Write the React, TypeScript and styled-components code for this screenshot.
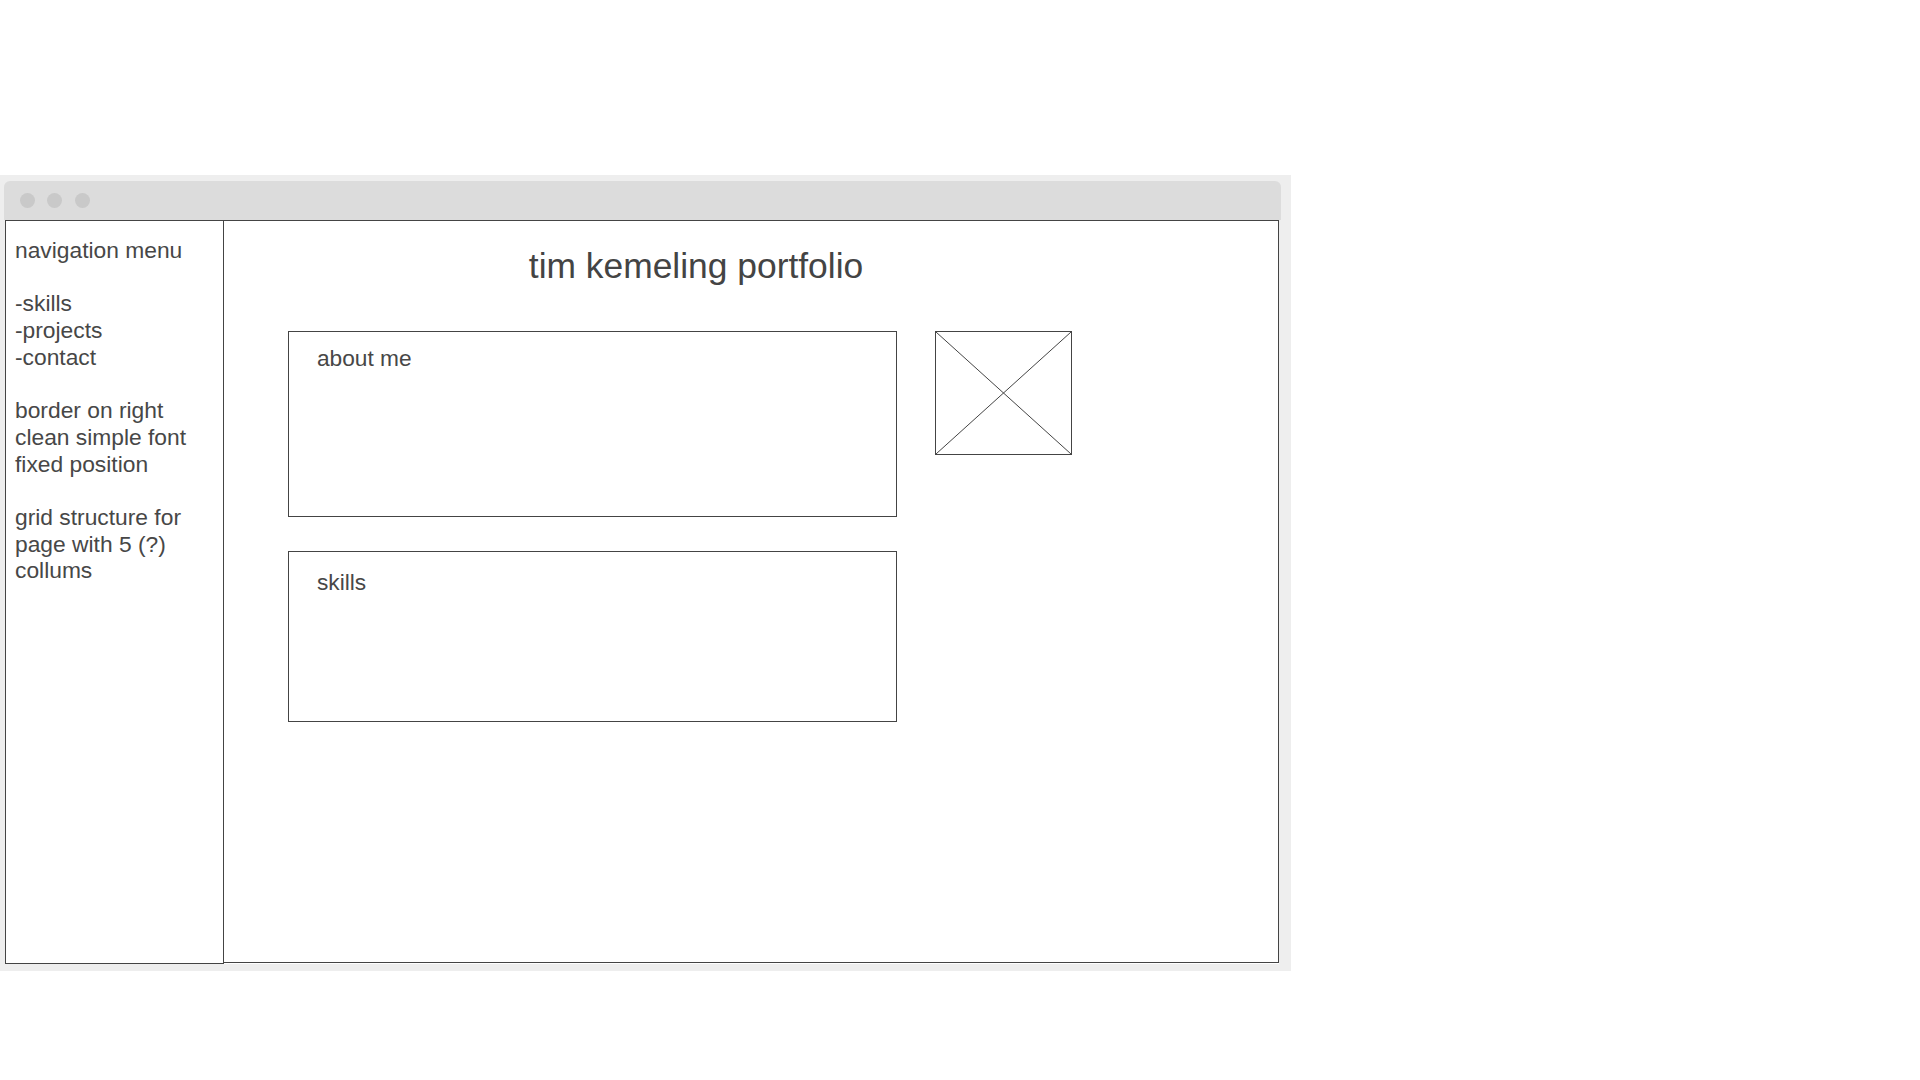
import styled, { createGlobalStyle } from 'styled-components';

const GlobalStyle = createGlobalStyle`
  html, body {
    margin: 0;
    padding: 0;
    background: #ffffff;
  }
  body {
    font-family: "Liberation Sans", Arial, sans-serif;
    color: #474747;
  }
`;

const Page = styled.div`
  width: 1920px;
  height: 1080px;
  padding-top: 175px;
  box-sizing: border-box;
`;

const Frame = styled.div`
  width: 1291px;
  height: 796px;
  background: #eeeeee;
  padding: 6px 10px 7px 4px;
  box-sizing: border-box;
  display: flex;
  flex-direction: column;
`;

const TitleBar = styled.div`
  height: 39px;
  flex: none;
  background: #dcdcdc;
  border-radius: 6px 6px 0 0;
  display: flex;
  align-items: center;
  gap: 12.5px;
  padding-left: 15.5px;
`;

const Dot = styled.span`
  width: 15px;
  height: 15px;
  border-radius: 50%;
  background: #c9c9c9;
`;

const Body = styled.div`
  flex: 1;
  display: flex;
  margin: 0 2px 0 1px;
  background: #ffffff;
`;

const Sidebar = styled.nav`
  width: 219px;
  flex: none;
  border: 1px solid #444444;
  box-sizing: border-box;
  padding: 16px 0 0 9px;
  font-size: 22.8px;
  line-height: 26.7px;
  white-space: pre-line;
`;

const Main = styled.main`
  flex: 1;
  border: 1px solid #444444;
  border-left: none;
  margin-bottom: 1px;
  padding: 25px 0 0 64px;
`;

const Title = styled.h1`
  margin: 0;
  width: 816px;
  text-align: center;
  font-size: 35.4px;
  line-height: 40px;
  font-weight: normal;
  color: #444444;
`;

const Grid = styled.div`
  margin-top: 45px;
  display: grid;
  grid-template-columns: 609px 137px;
  column-gap: 38px;
  row-gap: 34px;
  align-items: start;
`;

const Card = styled.section<{ $height: number; $padTop: number }>`
  height: ${(p) => p.$height}px;
  border: 1px solid #444444;
  box-sizing: border-box;
  padding: ${(p) => p.$padTop}px 0 0 28px;
  font-size: 22.7px;
  line-height: 26px;
`;

const ImageBox = styled.div`
  height: 124px;
  border: 1px solid #444444;
  box-sizing: border-box;
  grid-row: 1;
  grid-column: 2;

  svg {
    display: block;
    width: 100%;
    height: 100%;
  }
`;

const navText = `navigation menu

-skills
-projects
-contact

border on right
clean simple font
fixed position

grid structure for
page with 5 (?)
collums`;

export default function App() {
  return (
    <Page>
      <GlobalStyle />
      <Frame>
        <TitleBar>
          <Dot />
          <Dot />
          <Dot />
        </TitleBar>
        <Body>
          <Sidebar>{navText}</Sidebar>
          <Main>
            <Title>tim kemeling portfolio</Title>
            <Grid>
              <Card $height={186} $padTop={13}>about me</Card>
              <ImageBox>
                <svg viewBox="0 0 100 100" preserveAspectRatio="none">
                  <line x1="0" y1="0" x2="100" y2="100" stroke="#444444" strokeWidth="1" vectorEffect="non-scaling-stroke" />
                  <line x1="100" y1="0" x2="0" y2="100" stroke="#444444" strokeWidth="1" vectorEffect="non-scaling-stroke" />
                </svg>
              </ImageBox>
              <Card $height={171} $padTop={17}>skills</Card>
            </Grid>
          </Main>
        </Body>
      </Frame>
    </Page>
  );
}
